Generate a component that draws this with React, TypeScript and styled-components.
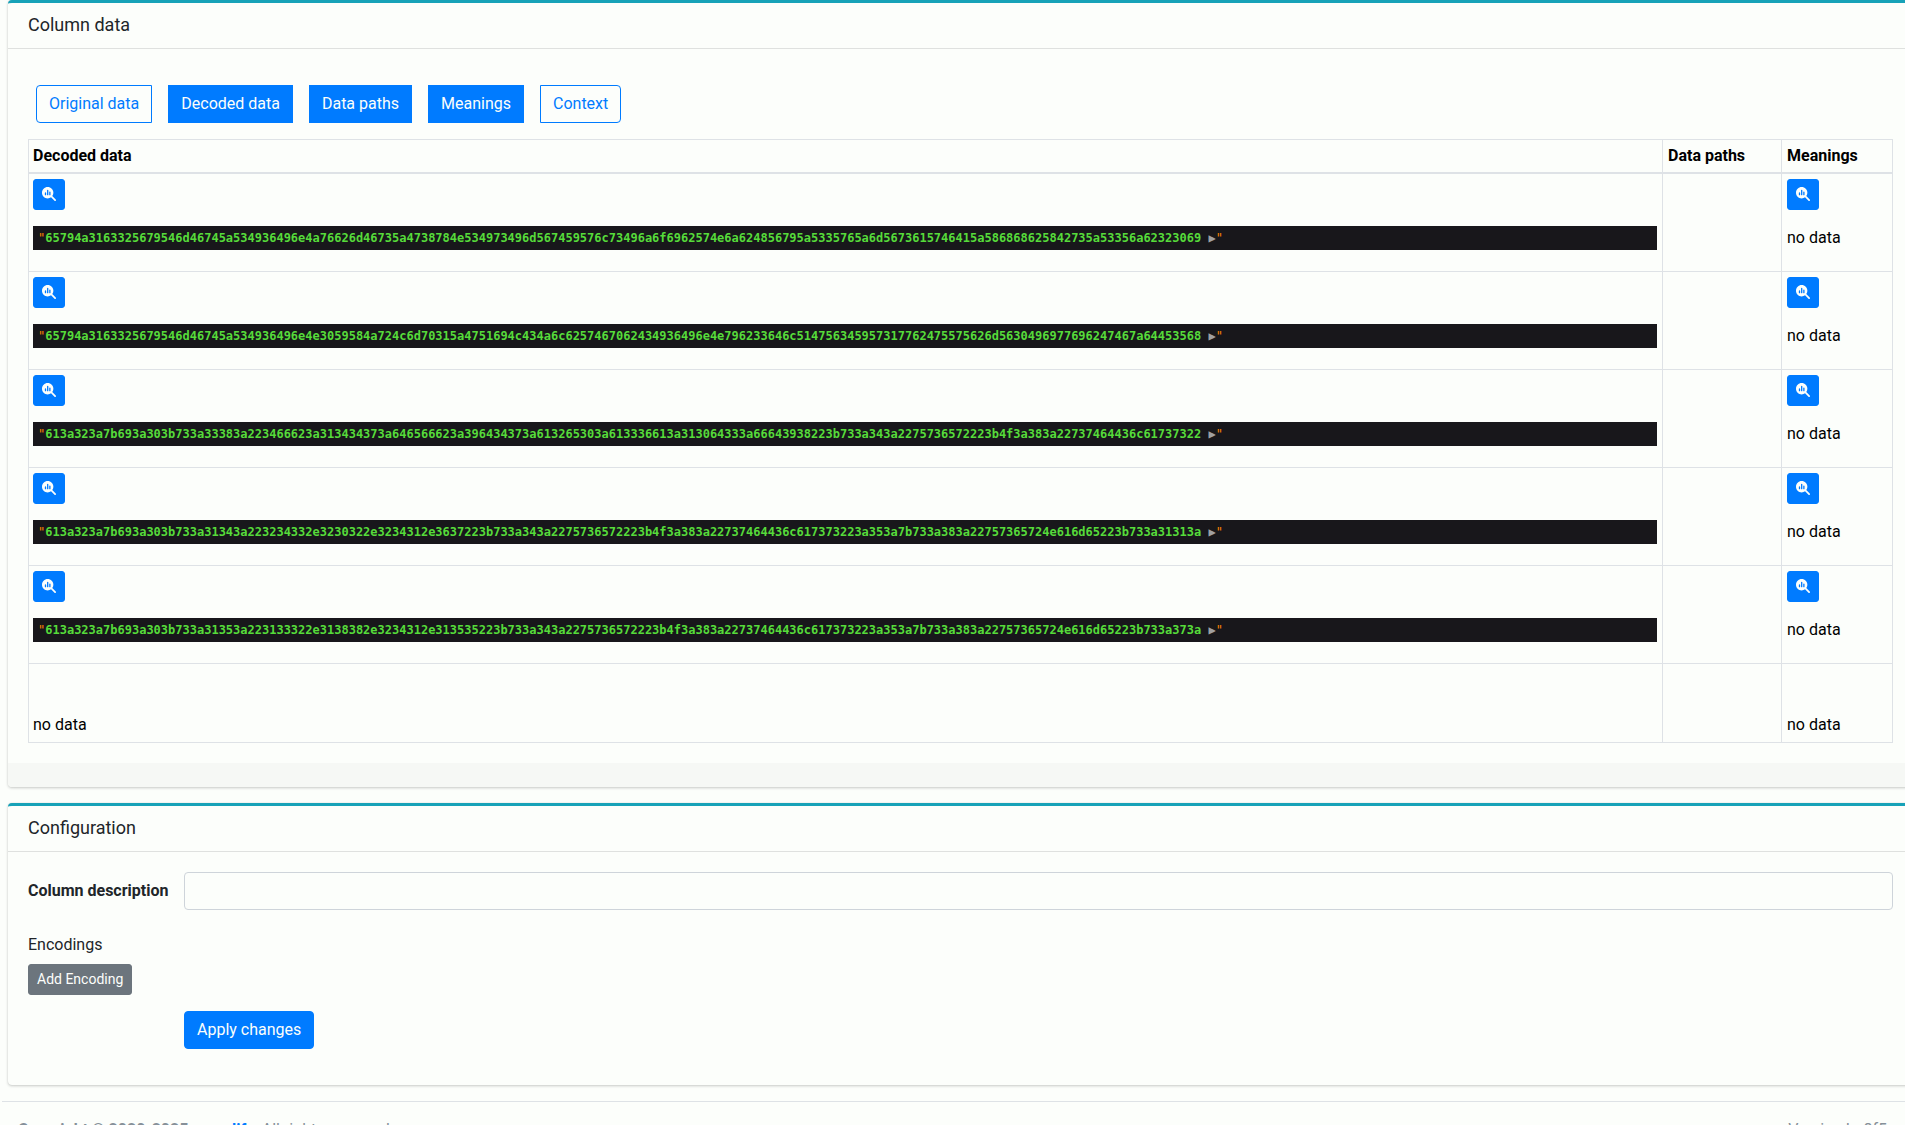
import React, { useState } from "react";
import styled, { createGlobalStyle } from "styled-components";
import { FaMagnifyingGlassChart } from "react-icons/fa6";

const GlobalStyle = createGlobalStyle`
  *, *::before, *::after { box-sizing: border-box; }
  body {
    margin: 0;
    background: #fcfefb;
    color: #212529;
    font: 400 16px/24px Roboto, sans-serif;
    overflow-x: hidden;
    scrollbar-width: none;
  }
  button, input { font: inherit; }
`;

const Content = styled.main`
  display: flex;
  flex-direction: column;
  gap: 16px;
  margin: 0 -8px 16px 8px;
`;

const Card = styled.section`
  border-top: 3px solid #17a2b8;
  border-radius: 4px;
  background: #fcfefb;
  box-shadow: 0 0 1px rgba(0, 0, 0, 0.125), 0 1px 3px rgba(0, 0, 0, 0.2);
`;

const CardHeader = styled.header`
  padding: 11px 20px 12px;
  border-bottom: 1px solid #dfe1df;
`;

const CardTitle = styled.h3`
  margin: 0;
  font-size: 18px;
  font-weight: 400;
  line-height: 22px;
`;

const CardBody = styled.div`
  padding: 20px;
`;

const CardFooter = styled.footer`
  height: 24px;
  border-radius: 0 0 4px 4px;
  background: #f6f8f5;
`;

const Toggles = styled.div`
  display: flex;
  gap: 16px;
  padding: 16px 8px;
`;

const Toggle = styled.button<{ $active: boolean }>`
  padding: 6px 12px;
  border: 1px solid #007bff;
  border-radius: 0;
  background: ${(p) => (p.$active ? "#007bff" : "transparent")};
  color: ${(p) => (p.$active ? "#fcfefb" : "#007bff")};
  cursor: pointer;

  &:first-child { border-radius: 4px 0 0 4px; }
  &:last-child { border-radius: 0 4px 4px 0; }
`;

const Table = styled.table`
  width: 100%;
  border-collapse: collapse;
  color: #000;
`;

const HeadCell = styled.th<{ $width?: number }>`
  width: ${(p) => (p.$width ? `${p.$width}px` : "auto")};
  padding: 4px 5px;
  border: 1px solid #dee2e6;
  border-bottom-width: 2px;
  text-align: left;
  font-weight: 700;

  &:first-child { padding-left: 4px; }
`;

const Cell = styled.td`
  padding: 5px;
  border: 1px solid #dee2e6;
  vertical-align: bottom;

  &:first-child { padding-left: 4px; }
`;

const CellStack = styled.div`
  display: flex;
  flex-direction: column;
  align-items: stretch;
  gap: 16px;
  padding-bottom: 16px;
`;

const EmptyStack = styled.div`
  padding-top: 44px;
`;

const InspectButton = styled.button`
  display: block;
  align-self: flex-start;
  padding: 4px 8px;
  border: 1px solid #007bff;
  border-radius: 3px;
  background: #007bff;
  color: #fcfefb;
  font-size: 14px;
  line-height: 21px;
  cursor: pointer;

  svg { display: block; width: 14px; height: 14px; margin: 3px 0 4px; }
`;

const Dump = styled.pre`
  margin: 0;
  padding: 5px;
  background: #18171b;
  color: #ff8400;
  font: 12px/14px "DejaVu Sans Mono", monospace;
`;

const DumpString = styled.span`
  color: #56db3a;
  font-weight: 700;
`;

const DumpToggle = styled.span`
  color: #a0a0a0;
`;

const FormRow = styled.div`
  display: flex;
  align-items: center;
  gap: 16px;
`;

const Label = styled.label`
  width: 140px;
  font-weight: 700;
  white-space: nowrap;
`;

const TextInput = styled.input`
  flex: 1;
  min-width: 0;
  height: 38px;
  padding: 6px 12px;
  border: 1px solid #ced4da;
  border-radius: 4px;
  background: #fcfefb;
  color: #495057;
`;

const Encodings = styled.div`
  padding: 23px 0 16px;
`;

const EncodingsLabel = styled.div`
  margin-bottom: 7px;
`;

const SmallButton = styled.button`
  display: block;
  padding: 4px 8px;
  border: 1px solid #6c757d;
  border-radius: 3px;
  background: #6c757d;
  color: #fcfefb;
  font-size: 14px;
  line-height: 21px;
  cursor: pointer;
`;

const Actions = styled.div`
  padding: 0 0 16px 156px;
`;

const PrimaryButton = styled.button`
  display: block;
  padding: 6px 12px;
  border: 1px solid #007bff;
  border-radius: 4px;
  background: #007bff;
  color: #fcfefb;
  cursor: pointer;
`;

const PageFooter = styled.footer`
  display: flex;
  justify-content: space-between;
  margin-left: 2px;
  padding: 16px 18px 16px 16px;
  border-top: 1px solid #dee2e6;
  color: #869099;
`;

const FooterLink = styled.a`
  color: #007bff;
  text-decoration: none;
`;

const values = [
  "65794a3163325679546d46745a534936496e4a76626d46735a4738784e534973496d567459576c73496a6f6962574e6a624856795a5335765a6d5673615746415a586868625842735a53356a62323069",
  "65794a3163325679546d46745a534936496e4e3059584a724c6d70315a4751694c434a6c6257467062434936496e4e796233646c514756345957317762475575626d5630496977696247467a64453568",
  "613a323a7b693a303b733a33383a223466623a313434373a646566623a396434373a613265303a613336613a313064333a66643938223b733a343a2275736572223b4f3a383a22737464436c61737322",
  "613a323a7b693a303b733a31343a223234332e3230322e3234312e3637223b733a343a2275736572223b4f3a383a22737464436c617373223a353a7b733a383a22757365724e616d65223b733a31313a",
  "613a323a7b693a303b733a31353a223133322e3138382e3234312e313535223b733a343a2275736572223b4f3a383a22737464436c617373223a353a7b733a383a22757365724e616d65223b733a373a",
];

const columns = ["Original data", "Decoded data", "Data paths", "Meanings", "Context"];

function Inspect() {
  return (
    <InspectButton type="button" aria-label="Inspect">
      <FaMagnifyingGlassChart />
    </InspectButton>
  );
}

export default function App() {
  const [active, setActive] = useState(["Decoded data", "Data paths", "Meanings"]);
  const toggle = (name: string) =>
    setActive((now) => (now.includes(name) ? now.filter((n) => n !== name) : [...now, name]));

  return (
    <>
      <GlobalStyle />
      <Content>
        <Card>
          <CardHeader>
            <CardTitle>Column data</CardTitle>
          </CardHeader>
          <CardBody>
            <Toggles>
              {columns.map((name) => (
                <Toggle
                  key={name}
                  type="button"
                  $active={active.includes(name)}
                  aria-pressed={active.includes(name)}
                  onClick={() => toggle(name)}
                >
                  {name}
                </Toggle>
              ))}
            </Toggles>
            <Table>
              <thead>
                <tr>
                  <HeadCell>Decoded data</HeadCell>
                  <HeadCell $width={119}>Data paths</HeadCell>
                  <HeadCell $width={111}>Meanings</HeadCell>
                </tr>
              </thead>
              <tbody>
                {values.map((value) => (
                  <tr key={value}>
                    <Cell>
                      <CellStack>
                        <Inspect />
                        <Dump>
                          "<DumpString>{value}</DumpString>
                          <DumpToggle> ▶</DumpToggle>"
                        </Dump>
                      </CellStack>
                    </Cell>
                    <Cell />
                    <Cell>
                      <CellStack>
                        <Inspect />
                        <span>no data</span>
                      </CellStack>
                    </Cell>
                  </tr>
                ))}
                <tr>
                  <Cell>
                    <EmptyStack>no data</EmptyStack>
                  </Cell>
                  <Cell />
                  <Cell>
                    <EmptyStack>no data</EmptyStack>
                  </Cell>
                </tr>
              </tbody>
            </Table>
          </CardBody>
          <CardFooter />
        </Card>

        <Card>
          <CardHeader>
            <CardTitle>Configuration</CardTitle>
          </CardHeader>
          <CardBody>
            <FormRow>
              <Label htmlFor="description">Column description</Label>
              <TextInput id="description" type="text" />
            </FormRow>
            <Encodings>
              <EncodingsLabel>Encodings</EncodingsLabel>
              <SmallButton type="button">Add Encoding</SmallButton>
            </Encodings>
            <Actions>
              <PrimaryButton type="submit">Apply changes</PrimaryButton>
            </Actions>
          </CardBody>
        </Card>
      </Content>
      <PageFooter>
        <div>
          <strong>
            Copyright © 2020-2025 <FooterLink href="#">exmolify</FooterLink>.
          </strong>{" "}
          All rights reserved.
        </div>
        <div>Version bc8f5</div>
      </PageFooter>
    </>
  );
}
